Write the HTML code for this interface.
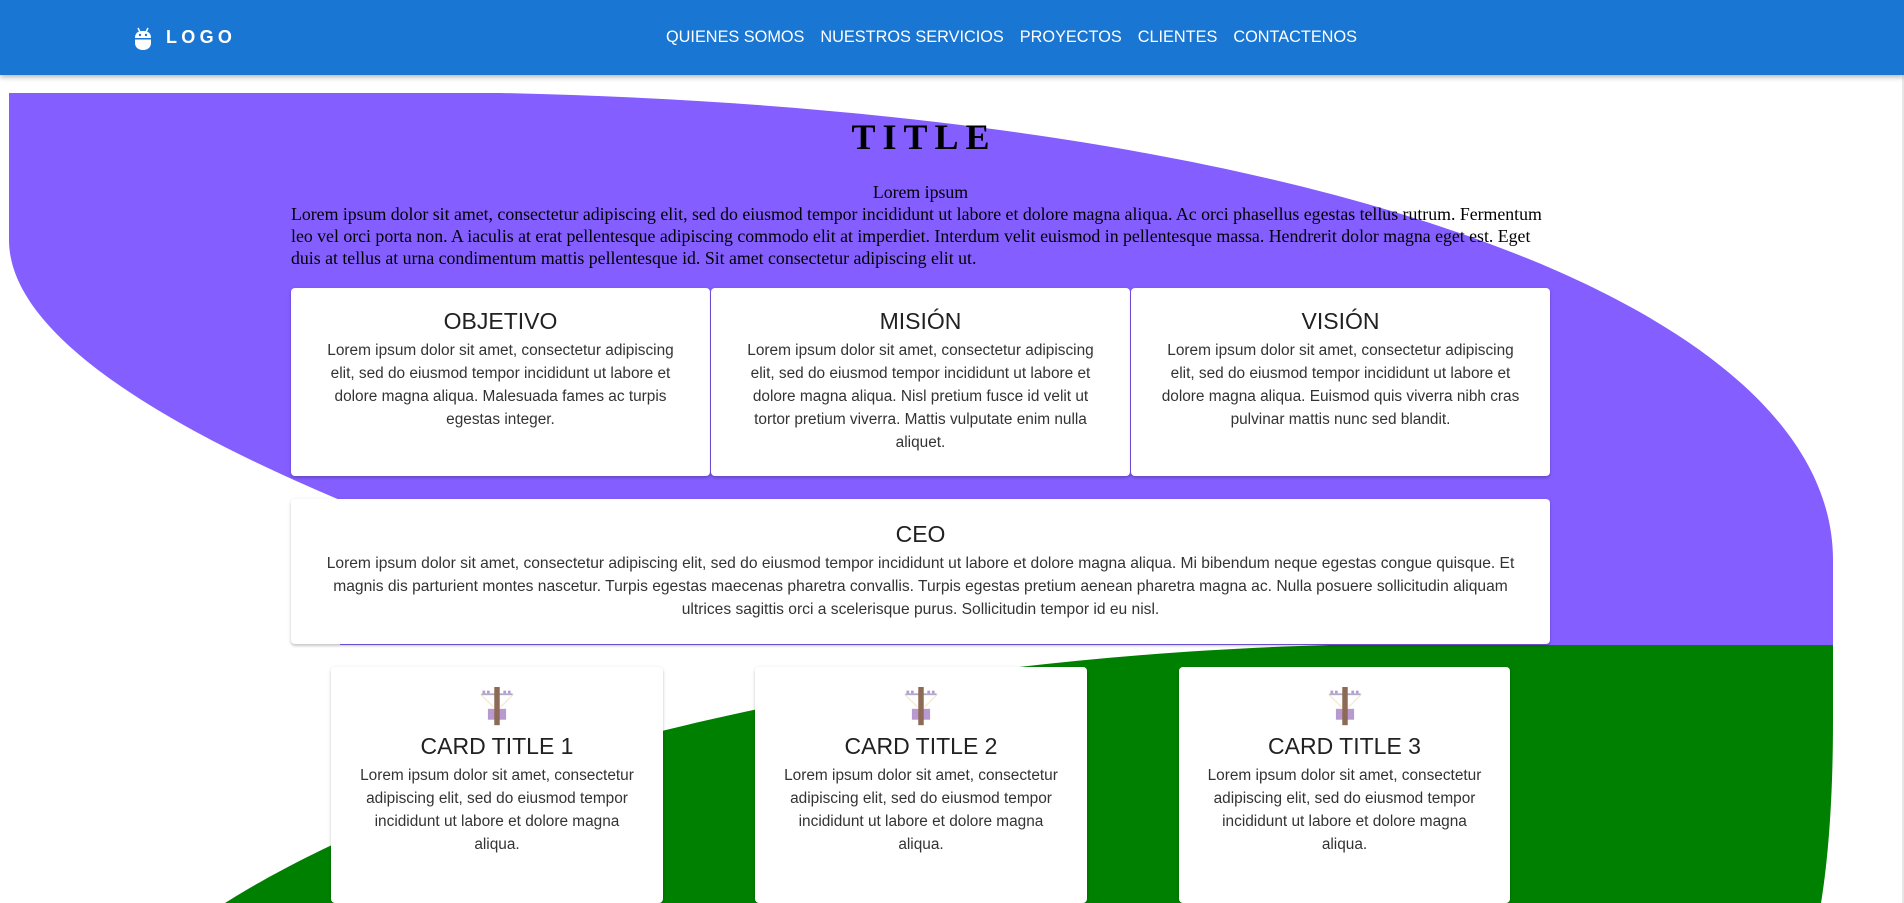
<!DOCTYPE html>
<html><head><meta charset="utf-8">
<style>
html,body{margin:0;padding:0;width:1904px;height:903px;overflow:hidden;}
body{position:relative;background:#fff;font-family:"Liberation Sans",Arial,sans-serif;color:#212121;}
.hdr{position:absolute;left:0;top:0;width:1904px;height:75px;background:#1976d2;box-shadow:0 2px 5px rgba(0,0,0,.3);z-index:5;}
.logo{position:absolute;left:134px;top:26px;}
.logotxt{position:absolute;left:166px;top:27px;color:#fff;font-weight:bold;font-size:18px;letter-spacing:4.3px;}
.nav{position:absolute;left:666px;top:28px;color:#fff;font-size:16.3px;white-space:nowrap;}
.nav span{margin-right:16px;}
svg.bg{position:absolute;left:0;top:0;}
.title{position:absolute;left:0;width:1848px;top:116px;text-align:center;font-family:"Liberation Serif",serif;font-weight:bold;font-size:36px;letter-spacing:7px;color:#000;line-height:42px;}
.intro{position:absolute;left:291px;width:1259px;top:181px;font-family:"Liberation Serif",serif;font-size:17.8px;line-height:22px;color:#000;}
.card{position:absolute;background:#fff;border-radius:4px;box-shadow:0 2px 2px rgba(0,0,0,.14),0 1px 4px rgba(0,0,0,.12);text-align:center;box-sizing:border-box;overflow:hidden;}
.card h3{margin:0;font-weight:normal;font-size:23px;line-height:30px;color:#212121;}
.card p{margin:3px 0 0;font-size:15.4px;line-height:23px;color:#333;}
</style></head><body>
<svg class="bg" width="1904" height="903" viewBox="0 0 1904 903">
<path d="M9,93 L500,93 C1300,110 1833,300 1833,560 L1833,645 L340,645 L340,500 C150,420 9,330 9,240 Z" fill="#845eff"/>
<path d="M225,903 C420,780 800,660 1330,645 L1833,645 L1833,720 C1833,800 1828,860 1821,903 Z" fill="#008000"/>
<rect x="1902" y="75" width="2" height="828" fill="#e6e6e6"/>
</svg>
<div class="hdr">
<svg class="logo" width="18" height="24" viewBox="0 0 18 24"><path d="M4,2 L6,6 M14,2 L12,6" stroke="#fff" stroke-width="1.5"/><path d="M1,12 C1,7 4,5 9,5 C14,5 17,7 17,12 L17,17 C17,21 14,24 9,24 C4,24 1,21 1,17 Z" fill="#fff"/><rect x="1" y="12" width="16" height="1.5" fill="#1976d2"/><circle cx="6" cy="9" r="1.2" fill="#1976d2"/><circle cx="12" cy="9" r="1.2" fill="#1976d2"/></svg>
<div class="logotxt">LOGO</div>
<div class="nav"><span>QUIENES SOMOS</span><span>NUESTROS SERVICIOS</span><span>PROYECTOS</span><span>CLIENTES</span><span>CONTACTENOS</span></div>
</div>
<div class="title">TITLE</div>
<div class="intro"><div style="text-align:center">Lorem ipsum</div>Lorem ipsum dolor sit amet, consectetur adipiscing elit, sed do eiusmod tempor incididunt ut labore et dolore magna aliqua. Ac orci phasellus egestas tellus rutrum. Fermentum leo vel orci porta non. A iaculis at erat pellentesque adipiscing commodo elit at imperdiet. Interdum velit euismod in pellentesque massa. Hendrerit dolor magna eget est. Eget duis at tellus at urna condimentum mattis pellentesque id. Sit amet consectetur adipiscing elit ut.</div>

<div class="card" style="left:291px;top:288px;width:419px;height:188px;padding:18px 30px 0;"><h3>OBJETIVO</h3><p>Lorem ipsum dolor sit amet, consectetur adipiscing elit, sed do eiusmod tempor incididunt ut labore et dolore magna aliqua. Malesuada fames ac turpis egestas integer.</p></div>
<div class="card" style="left:711px;top:288px;width:419px;height:188px;padding:18px 30px 0;"><h3>MISIÓN</h3><p>Lorem ipsum dolor sit amet, consectetur adipiscing elit, sed do eiusmod tempor incididunt ut labore et dolore magna aliqua. Nisl pretium fusce id velit ut tortor pretium viverra. Mattis vulputate enim nulla aliquet.</p></div>
<div class="card" style="left:1131px;top:288px;width:419px;height:188px;padding:18px 30px 0;"><h3>VISIÓN</h3><p>Lorem ipsum dolor sit amet, consectetur adipiscing elit, sed do eiusmod tempor incididunt ut labore et dolore magna aliqua. Euismod quis viverra nibh cras pulvinar mattis nunc sed blandit.</p></div>

<div class="card" style="left:291px;top:499px;width:1259px;height:145px;padding:20px 24px 0;"><h3>CEO</h3><p style="font-size:15.6px">Lorem ipsum dolor sit amet, consectetur adipiscing elit, sed do eiusmod tempor incididunt ut labore et dolore magna aliqua. Mi bibendum neque egestas congue quisque. Et magnis dis parturient montes nascetur. Turpis egestas maecenas pharetra convallis. Turpis egestas pretium aenean pharetra magna ac. Nulla posuere sollicitudin aliquam ultrices sagittis orci a scelerisque purus. Sollicitudin tempor id eu nisl.</p></div>

<div class="card" style="left:331px;top:667px;width:332px;height:236px;padding:20px 24px 0;">
<svg width="38" height="40" viewBox="0 0 40 44"><path d="M2,8 L38,8 M2,8 L16,22 M38,8 L24,22" stroke="#f1e6c8" stroke-width="1.2" fill="none"/><rect x="4" y="4" width="3" height="3" fill="#b89ad0"/><rect x="9" y="4" width="3" height="3" fill="#b89ad0"/><rect x="27" y="4" width="3" height="3" fill="#b89ad0"/><rect x="32" y="4" width="3" height="3" fill="#b89ad0"/><rect x="3" y="7" width="34" height="2" fill="#b0a9c8"/><rect x="10" y="24" width="20" height="12" fill="#b89ad0"/><rect x="17" y="0" width="6" height="42" fill="#8d6a55"/></svg>
<h3 style="margin-top:-1px">CARD TITLE 1</h3><p>Lorem ipsum dolor sit amet, consectetur adipiscing elit, sed do eiusmod tempor incididunt ut labore et dolore magna aliqua.</p></div>
<div class="card" style="left:755px;top:667px;width:332px;height:236px;padding:20px 24px 0;">
<svg width="38" height="40" viewBox="0 0 40 44"><path d="M2,8 L38,8 M2,8 L16,22 M38,8 L24,22" stroke="#f1e6c8" stroke-width="1.2" fill="none"/><rect x="4" y="4" width="3" height="3" fill="#b89ad0"/><rect x="9" y="4" width="3" height="3" fill="#b89ad0"/><rect x="27" y="4" width="3" height="3" fill="#b89ad0"/><rect x="32" y="4" width="3" height="3" fill="#b89ad0"/><rect x="3" y="7" width="34" height="2" fill="#b0a9c8"/><rect x="10" y="24" width="20" height="12" fill="#b89ad0"/><rect x="17" y="0" width="6" height="42" fill="#8d6a55"/></svg>
<h3 style="margin-top:-1px">CARD TITLE 2</h3><p>Lorem ipsum dolor sit amet, consectetur adipiscing elit, sed do eiusmod tempor incididunt ut labore et dolore magna aliqua.</p></div>
<div class="card" style="left:1179px;top:667px;width:331px;height:236px;padding:20px 24px 0;">
<svg width="38" height="40" viewBox="0 0 40 44"><path d="M2,8 L38,8 M2,8 L16,22 M38,8 L24,22" stroke="#f1e6c8" stroke-width="1.2" fill="none"/><rect x="4" y="4" width="3" height="3" fill="#b89ad0"/><rect x="9" y="4" width="3" height="3" fill="#b89ad0"/><rect x="27" y="4" width="3" height="3" fill="#b89ad0"/><rect x="32" y="4" width="3" height="3" fill="#b89ad0"/><rect x="3" y="7" width="34" height="2" fill="#b0a9c8"/><rect x="10" y="24" width="20" height="12" fill="#b89ad0"/><rect x="17" y="0" width="6" height="42" fill="#8d6a55"/></svg>
<h3 style="margin-top:-1px">CARD TITLE 3</h3><p>Lorem ipsum dolor sit amet, consectetur adipiscing elit, sed do eiusmod tempor incididunt ut labore et dolore magna aliqua.</p></div>
</body></html>
